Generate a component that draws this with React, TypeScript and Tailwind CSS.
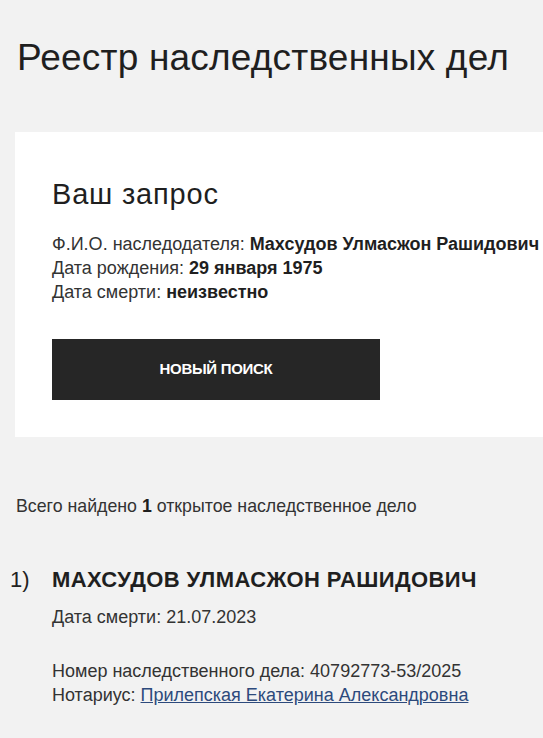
export default function App() {
  const font = { fontFamily: '"Liberation Sans", Arial, sans-serif' };
  return (
    <div className="min-h-[738px] w-[543px] overflow-hidden bg-[#f2f2f2] text-[#222]" style={font}>
      <h1 className="pl-[17px] pt-[38px] text-[37px] leading-[40px] font-normal tracking-[0.2px] text-[#1f1f1f]">Реестр наследственных дел</h1>
      <div className="ml-[15px] mt-[54px] h-[305px] bg-white pl-[37px] pt-[46px]">
        <h2 className="text-[29px] leading-[32px] font-normal tracking-[0.8px] text-[#1f1f1f]">Ваш запрос</h2>
        <div className="mt-[22px] text-[18px] leading-[24px] text-[#333] whitespace-nowrap">
          <div>Ф.И.О. наследодателя: <b className="text-[#1f1f1f]">Махсудов Улмасжон Рашидович</b></div>
          <div>Дата рождения: <b className="text-[#1f1f1f]">29 января 1975</b></div>
          <div>Дата смерти: <b className="text-[#1f1f1f]">неизвестно</b></div>
        </div>
        <button className="mt-[35px] flex h-[61px] w-[328px] items-center justify-center bg-[#262626] text-[15px] font-bold text-white tracking-[-0.3px]">
          НОВЫЙ ПОИСК
        </button>
      </div>
      <div className="mt-[57px] pl-[16px] text-[17.75px] leading-[24px] text-[#333]">
        Всего найдено <b className="text-[#1f1f1f]">1</b> открытое наследственное дело
      </div>
      <div className="mt-[48px] flex">
        <div className="w-[52px] pl-[10px] text-[22px] leading-[28px] text-[#222]">1)</div>
        <div>
          <div className="text-[22px] leading-[28px] font-bold tracking-[0.4px] text-[#1f1f1f]">МАХСУДОВ УЛМАСЖОН РАШИДОВИЧ</div>
          <div className="mt-[11px] text-[18px] leading-[24px] text-[#333]">Дата смерти: 21.07.2023</div>
          <div className="mt-[30px] text-[18px] leading-[24px] text-[#333]">Номер наследственного дела: 40792773-53/2025</div>
          <div className="text-[18px] leading-[24px] text-[#333]">
            Нотариус: <a className="text-[#2d4a7c] underline">Прилепская Екатерина Александровна</a>
          </div>
        </div>
      </div>
    </div>
  );
}
